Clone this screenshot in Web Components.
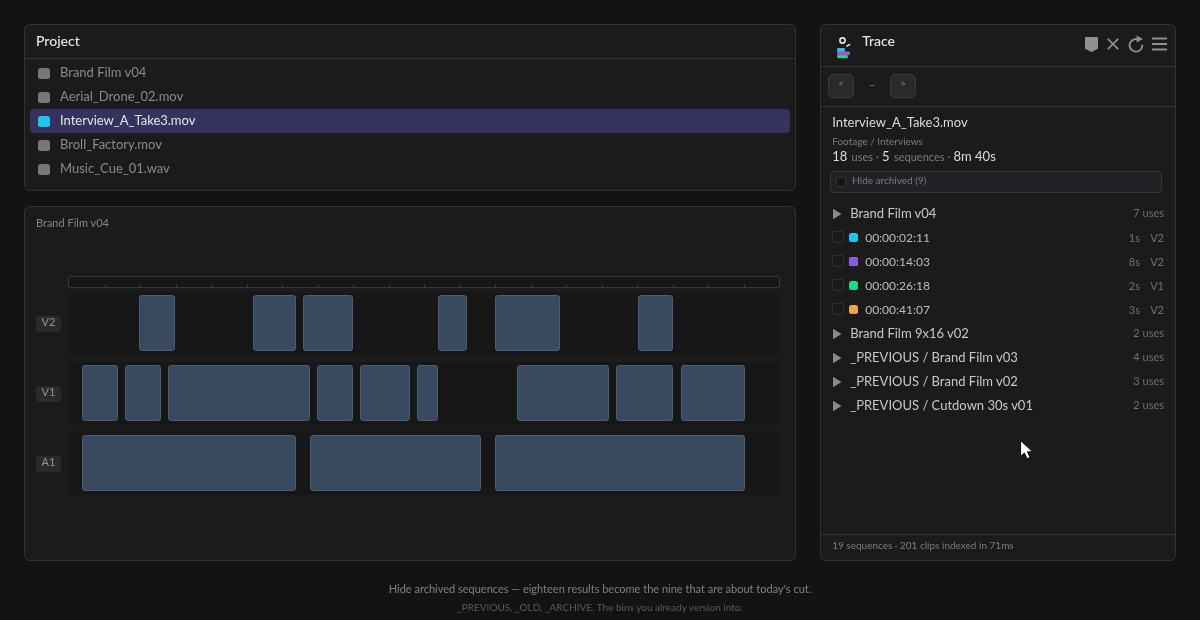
<!DOCTYPE html>
<html>
<head>
<meta charset="utf-8">
<title>Trace</title>
<style>
  html, body { margin: 0; height: 100%; }
  body {
    background: #131313;
    color: #d8d8d8;
    font-family: Lato, "Liberation Sans", sans-serif;
    overflow: hidden;
  }
</style>
</head>
<body>
<app-shell>
  <project-panel slot="left">
    <project-row>Brand Film v04</project-row>
    <project-row>Aerial_Drone_02.mov</project-row>
    <project-row selected>Interview_A_Take3.mov</project-row>
    <project-row>Broll_Factory.mov</project-row>
    <project-row>Music_Cue_01.wav</project-row>
  </project-panel>
  <timeline-panel slot="left" name="Brand Film v04">
    <timeline-track label="V2" clips="10-15 26-32 33-40 52-56 60-69.1 80-85"></timeline-track>
    <timeline-track label="V1" clips="2-7 8-13 14-34 35-40 41-48 49-52 63-76 77-85 86.1-95"></timeline-track>
    <timeline-track label="A1" clips="2-32 34-58 60-95"></timeline-track>
  </timeline-panel>
  <trace-panel slot="right">
    <trace-seq uses="7 uses">Brand Film v04</trace-seq>
    <trace-hit color="#22c4ee" dur="1s" track="V2">00:00:02:11</trace-hit>
    <trace-hit color="#8a5ad8" ringed dur="8s" track="V2">00:00:14:03</trace-hit>
    <trace-hit color="#1fd886" dur="2s" track="V1">00:00:26:18</trace-hit>
    <trace-hit color="#e8a84a" dur="3s" track="V2">00:00:41:07</trace-hit>
    <trace-seq uses="2 uses">Brand Film 9x16 v02</trace-seq>
    <trace-seq uses="4 uses">_PREVIOUS / Brand Film v03</trace-seq>
    <trace-seq uses="3 uses">_PREVIOUS / Brand Film v02</trace-seq>
    <trace-seq uses="2 uses">_PREVIOUS / Cutdown 30s v01</trace-seq>
  </trace-panel>
  <span slot="caption">Hide archived sequences — eighteen results become the nine that are about today's cut.</span>
  <span slot="note">_PREVIOUS, _OLD, _ARCHIVE. The bins you already version into.</span>
</app-shell>

<script>
class AppShell extends HTMLElement {
  constructor() {
    super();
    this.attachShadow({ mode: 'open' });
    this.shadowRoot.innerHTML = `
      <style>
        :host {
          display: flex;
          flex-direction: column;
          box-sizing: border-box;
          height: 620px;
          padding: 24px 24px 0;
          position: relative;
          will-change: transform;
        }
        .main {
          display: grid;
          grid-template-columns: 772.2px 1fr;
          column-gap: 24px;
          height: 537px;
        }
        .left {
          display: flex;
          flex-direction: column;
          gap: 15px;
          min-height: 0;
          min-width: 0;
        }
        .caption {
          margin-top: 20px;
          text-align: center;
          font-size: 11px;
          line-height: 16px;
          color: #808080;
        }
        .note {
          margin-top: 3px;
          text-align: center;
          font-size: 10px;
          line-height: 14px;
          color: #5a5a5a;
        }
        .cursor {
          position: absolute;
          left: 1020px;
          top: 440px;
          width: 14px;
          height: 20px;
        }
      </style>
      <div class="main">
        <div class="left"><slot name="left"></slot></div>
        <slot name="right"></slot>
      </div>
      <div class="caption"><slot name="caption"></slot></div>
      <div class="note"><slot name="note"></slot></div>
      <svg class="cursor" viewBox="0 0 14 20">
        <path d="M0.6 0.6 V16.4 L4.4 13 L7 18.8 L10 17.4 L7.5 11.8 H12.6 Z" fill="#fff" stroke="#000" stroke-width="0.9"/>
      </svg>
    `;
  }
}

class ProjectPanel extends HTMLElement {
  constructor() {
    super();
    this.attachShadow({ mode: 'open' });
    this.shadowRoot.innerHTML = `
      <style>
        :host {
          display: block;
          box-sizing: border-box;
          height: 167px;
          background: #1b1b1b;
          border: 1px solid #333;
          border-radius: 6px;
        }
        header {
          height: 34px;
          box-sizing: border-box;
          padding: 0 11px;
          line-height: 32px;
          border-bottom: 1px solid #333;
          font-size: 14px;
          font-weight: 500;
          color: #e6e6e6;
        }
        .list {
          display: flex;
          flex-direction: column;
          padding: 2px 5px 0;
        }
      </style>
      <header>Project</header>
      <div class="list"><slot></slot></div>
    `;
  }
}

class ProjectRow extends HTMLElement {
  constructor() {
    super();
    this.attachShadow({ mode: 'open' });
    this.shadowRoot.innerHTML = `
      <style>
        :host {
          display: flex;
          align-items: center;
          gap: 10px;
          height: 24px;
          padding: 0 8px;
          border-radius: 4px;
          font-size: 13px;
          color: #8a8a8a;
        }
        :host([selected]) {
          background: #35325f;
          color: #e4e4ea;
        }
        i {
          display: block;
          width: 12px;
          height: 11px;
          border-radius: 2.5px;
          background: #77757a;
        }
        :host([selected]) i { background: #22c4ee; }
        span { margin-bottom: 2px; }
      </style>
      <i></i><span><slot></slot></span>
    `;
  }
}

class TimelinePanel extends HTMLElement {
  constructor() {
    super();
    this.attachShadow({ mode: 'open' });
    let ticks = '';
    for (let n = 1; n < 20; n++) ticks += `<b style="left:${n * 5}%"></b>`;
    this.shadowRoot.innerHTML = `
      <style>
        :host {
          display: block;
          box-sizing: border-box;
          flex: 1;
          min-height: 0;
          background: #1b1b1b;
          border: 1px solid #333;
          border-radius: 6px;
          padding: 9px 11px 0;
        }
        .name {
          font-size: 11px;
          line-height: 14px;
          color: #858585;
        }
        .ruler {
          position: relative;
          box-sizing: border-box;
          height: 12px;
          margin: 46px 4px 4px 32px;
          background: #161616;
          border: 1px solid #383838;
          border-radius: 2px;
        }
        .ruler b {
          position: absolute;
          bottom: 0;
          width: 1px;
          height: 3px;
          background: #3a3a3a;
        }
        .tracks {
          display: flex;
          flex-direction: column;
          gap: 7px;
        }
      </style>
      <div class="name">${this.getAttribute('name')}</div>
      <div class="ruler">${ticks}</div>
      <div class="tracks"><slot></slot></div>
    `;
  }
}

class TimelineTrack extends HTMLElement {
  constructor() {
    super();
    this.attachShadow({ mode: 'open' });
    // clip ranges are percent of the lane
    const clips = this.getAttribute('clips').split(' ').map(c => {
      const [a, b] = c.split('-').map(Number);
      return `<div class="clip" style="left:${a}%;width:${b - a}%"></div>`;
    }).join('');
    this.shadowRoot.innerHTML = `
      <style>
        :host {
          display: flex;
          align-items: center;
          height: 63px;
          margin-right: 4px;
        }
        .label {
          box-sizing: border-box;
          width: 25px;
          height: 16px;
          margin-right: 7px;
          border-radius: 4px;
          background: #2a2a2a;
          text-align: center;
          font-size: 11px;
          line-height: 12px;
          color: #939393;
        }
        .lane {
          position: relative;
          flex: 1;
          height: 100%;
          background: #171717;
          border-radius: 3px;
        }
        .clip {
          position: absolute;
          top: 3px;
          height: 56px;
          box-sizing: border-box;
          background: #3a4a5e;
          border: 1px solid #4a5d74;
          border-radius: 3px;
        }
      </style>
      <div class="label">${this.getAttribute('label')}</div>
      <div class="lane">${clips}</div>
    `;
  }
}

class TracePanel extends HTMLElement {
  constructor() {
    super();
    this.attachShadow({ mode: 'open' });
    this.shadowRoot.innerHTML = `
      <style>
        :host {
          display: flex;
          flex-direction: column;
          box-sizing: border-box;
          background: #1b1b1b;
          border: 1px solid #333;
          border-radius: 6px;
          min-height: 0;
        }
        header {
          display: flex;
          box-sizing: border-box;
          height: 42px;
          padding: 0 8px 0 15px;
          border-bottom: 1px solid #333;
        }
        .logo { width: 16px; height: 24px; margin-top: 11px; flex: none; }
        .title {
          margin: 7px 0 0 10px;
          font-size: 14px;
          line-height: 18px;
          font-weight: 500;
          color: #e6e6e6;
          flex: 1;
        }
        .tools {
          display: flex;
          align-items: center;
          height: 18px;
          margin-top: 10px;
        }
        .tools svg { display: block; height: 18px; }
        .nav {
          display: flex;
          align-items: center;
          box-sizing: border-box;
          height: 40px;
          padding: 0 7px 1px;
          border-bottom: 1px solid #333;
        }
        .nav button {
          box-sizing: border-box;
          width: 26px;
          height: 24px;
          padding: 0 0 7px;
          background: #2a2a2a;
          border: 1px solid #3a3a3a;
          border-radius: 5px;
          font: 10px/12px Lato, sans-serif;
          color: #8a8a8a;
        }
        .nav span {
          width: 36px;
          margin-bottom: 3px;
          text-align: center;
          font-size: 11px;
          color: #777;
        }
        .info { padding: 7px 11px 0; }
        .file {
          font-size: 13px;
          line-height: 17px;
          color: #dcdcdc;
        }
        .path {
          margin-top: 4px;
          font-size: 10px;
          line-height: 13px;
          color: #7c7c7c;
        }
        .stats {
          font-size: 13px;
          line-height: 16px;
          color: #dcdcdc;
        }
        .stats small {
          font-size: 11px;
          color: #7c7c7c;
          margin-left: 1px;
        }
        .filter {
          display: flex;
          align-items: flex-start;
          gap: 6px;
          box-sizing: border-box;
          height: 22px;
          margin: 6px 2px 0 -2px;
          padding: 5px 5px 0;
          background: #212126;
          border: 1px solid #363636;
          border-radius: 3px;
          font-size: 10px;
          line-height: 11px;
          color: #7c7c7c;
        }
        .filter i {
          display: block;
          box-sizing: border-box;
          width: 10px;
          height: 10px;
          background: #161616;
          border: 1px solid #333;
          border-radius: 2px;
        }
        .filter span { margin-top: -2px; }
        .list {
          flex: 1;
          display: flex;
          flex-direction: column;
          padding: 8px 11px 0;
        }
        footer {
          box-sizing: border-box;
          height: 26px;
          padding: 0 11px;
          border-top: 1px solid #333;
          font-size: 10px;
          line-height: 21px;
          color: #7c7c7c;
        }
      </style>
      <header>
        <svg class="logo" viewBox="0 0 16 24">
          <circle cx="6.5" cy="4.5" r="2.6" fill="none" stroke="#e8e8e8" stroke-width="1.6"/>
          <path d="M11 10 L13.6 8.6" stroke="#e8e8e8" stroke-width="1.6" stroke-linecap="round"/>
          <rect x="1" y="12" width="8" height="4" rx="1.4" fill="#22c4ee"/>
          <rect x="1" y="19" width="11" height="3.2" rx="1.4" fill="#1fd886"/>
          <rect x="1" y="15.5" width="13" height="3.7" rx="1.4" fill="#a855c8"/>
        </svg>
        <div class="title">Trace</div>
        <div class="tools">
          <svg width="13" viewBox="0 0 13 18" style="margin-right:9px"><path d="M0.5 2.5 H12.5 V13.5 L6.5 16.5 L0.5 13.5 Z" fill="#8f8f8f" stroke="#8f8f8f" stroke-linejoin="round"/></svg>
          <svg width="12" viewBox="0 0 12 18" style="margin-right:9px"><path d="M0.8 3.8 L11.2 14.2 M11.2 3.8 L0.8 14.2" stroke="#8f8f8f" stroke-width="1.7" fill="none"/></svg>
          <svg width="16" viewBox="0 0 16 18" style="margin-right:8px"><path d="M11.6 5.2 A6.3 6.3 0 1 0 14.2 9.6" stroke="#8f8f8f" stroke-width="1.9" fill="none"/><path d="M8.6 0.4 L15 4 L8.6 7.6 Z" fill="#8f8f8f"/></svg>
          <svg width="15" viewBox="0 0 15 18" ><path d="M0 3.5 H15 M0 9 H15 M0 14.5 H15" stroke="#8f8f8f" stroke-width="1.8" fill="none"/></svg>
        </div>
      </header>
      <div class="nav"><button>&lt;</button><span>–</span><button>&gt;</button></div>
      <div class="info">
        <div class="file">Interview_A_Take3.mov</div>
        <div class="path">Footage / Interviews</div>
        <div class="stats">18 <small>uses ·</small> 5 <small>sequences ·</small> 8m 40s</div>
        <div class="filter"><i></i><span>Hide archived (9)</span></div>
      </div>
      <div class="list"><slot></slot></div>
      <footer>19 sequences · 201 clips indexed in 71ms</footer>
    `;
  }
}

class TraceSeq extends HTMLElement {
  constructor() {
    super();
    this.attachShadow({ mode: 'open' });
    this.shadowRoot.innerHTML = `
      <style>
        :host {
          display: flex;
          align-items: center;
          height: 24px;
          font-size: 13px;
          color: #c8c8c8;
        }
        svg { width: 10px; height: 12px; margin: 1px 8px 0 0; flex: none; }
        .name { flex: 1; }
        .uses { font-size: 11px; color: #707070; margin-bottom: 1px; }
      </style>
      <svg viewBox="0 0 10 12"><path d="M1 0.8 L9.4 6 L1 11.2 Z" fill="#8a8a8a"/></svg>
      <span class="name"><slot></slot></span>
      <span class="uses">${this.getAttribute('uses')}</span>
    `;
  }
}

class TraceHit extends HTMLElement {
  constructor() {
    super();
    this.attachShadow({ mode: 'open' });
    this.shadowRoot.innerHTML = `
      <style>
        :host {
          display: flex;
          align-items: center;
          height: 24px;
          font-size: 12px;
          color: #bcbcbc;
        }
        .check {
          box-sizing: border-box;
          width: 12px;
          height: 12px;
          margin-right: 5px;
          background: #1a1a1a;
          border: 1px solid #2f2f2f;
          border-radius: 2px;
        }
        .dot {
          width: 9px;
          height: 9px;
          margin-right: 7px;
          border-radius: 2.5px;
          background: ${this.getAttribute('color')};
        }
        :host([ringed]) .dot {
          box-shadow: inset 0 0 0 1px #a45cd8, inset 0 0 0 2px #6f5ce8;
        }
        .tc { flex: 1; }
        .dur, .track { font-size: 11px; color: #707070; }
        .track { width: 24px; text-align: right; }
      </style>
      <div class="check"></div>
      <div class="dot"></div>
      <span class="tc"><slot></slot></span>
      <span class="dur">${this.getAttribute('dur')}</span>
      <span class="track">${this.getAttribute('track')}</span>
    `;
  }
}

customElements.define('app-shell', AppShell);
customElements.define('project-panel', ProjectPanel);
customElements.define('project-row', ProjectRow);
customElements.define('timeline-panel', TimelinePanel);
customElements.define('timeline-track', TimelineTrack);
customElements.define('trace-panel', TracePanel);
customElements.define('trace-seq', TraceSeq);
customElements.define('trace-hit', TraceHit);
</script>
</body>
</html>
